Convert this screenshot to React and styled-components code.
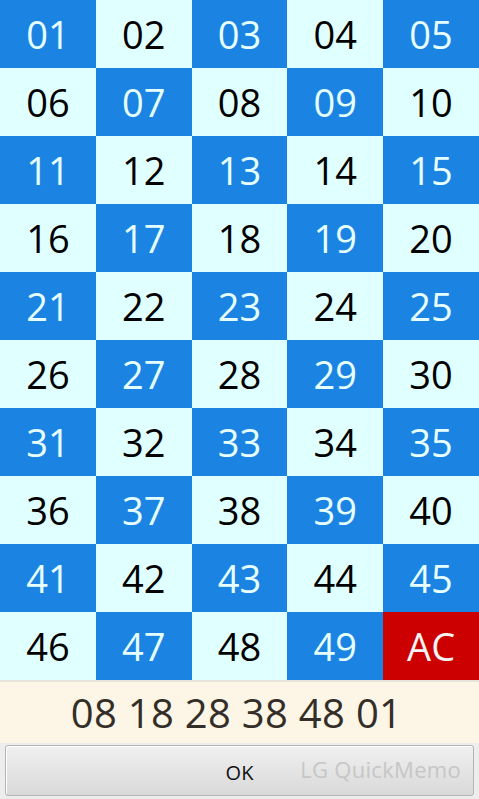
import React from 'react';
import styled, { createGlobalStyle } from 'styled-components';

const GlobalStyle = createGlobalStyle`
    html, body {
        margin: 0;
        padding: 0;
        background: #ececec;
    }
    body {
        font-family: "Open Sans", "Noto Sans", "DejaVu Sans", sans-serif;
    }
`;

const picked = [8, 18, 28, 38, 48, 1];

export default function App() {
    const cells = [];
    for (let n = 1; n <= 49; n++) cells.push(n);

    return (
        <Screen>
            <GlobalStyle />
            <Grid>
                {cells.map((n) => {
                    const row = Math.floor((n - 1) / 5);
                    const col = (n - 1) % 5;
                    const dark = (row + col) % 2 === 0;
                    return (
                        <Cell key={n} $dark={dark}>
                            {String(n).padStart(2, '0')}
                        </Cell>
                    );
                })}
                <ClearCell>AC</ClearCell>
            </Grid>
            <ResultBar>{picked.map((n) => String(n).padStart(2, '0')).join(' ')}</ResultBar>
            <ButtonArea>
                <OkButton>
                    OK
                    <Watermark>LG QuickMemo</Watermark>
                </OkButton>
            </ButtonArea>
        </Screen>
    );
}

const Screen = styled.div`
    display: flex;
    flex-direction: column;
    width: 479px;
    height: 799px;
    overflow: hidden;
`;

const Grid = styled.div`
    display: grid;
    grid-template-columns: repeat(5, 1fr);
    grid-auto-rows: 68px;
`;

const Cell = styled.div`
    display: flex;
    justify-content: center;
    align-items: center;
    font-size: 38px;
    background: ${(p) => (p.$dark ? '#1b84e2' : '#e0ffff')};
    color: ${(p) => (p.$dark ? '#e6ffff' : '#000000')};
`;

const ClearCell = styled(Cell)`
    background: #cc0000;
    color: #f4f4f4;
`;

const ResultBar = styled.div`
    display: flex;
    justify-content: center;
    align-items: center;
    height: 63px;
    padding-right: 6px;
    background: #fdf5e6;
    border-top: 2px solid #e8e4dc;
    box-sizing: border-box;
    font-size: 40px;
    color: #332e28;
    letter-spacing: 0.3px;
`;

const ButtonArea = styled.div`
    flex: 1;
    display: flex;
    padding: 2px 5px 3px 5px;
    background: #ededed;
`;

const OkButton = styled.div`
    position: relative;
    flex: 1;
    display: flex;
    justify-content: center;
    align-items: center;
    padding-top: 4px;
    border: 1px solid #b4b4b4;
    border-radius: 3px;
    background: linear-gradient(#f0f0f0, #d9d9d9);
    box-shadow: inset 1px 1px 0 #ffffff;
    font-size: 20px;
    color: #111111;
`;

const Watermark = styled.span`
    position: absolute;
    right: 12px;
    top: 8px;
    font-size: 22px;
    color: #c6c6c6;
    letter-spacing: 0.3px;
`;
